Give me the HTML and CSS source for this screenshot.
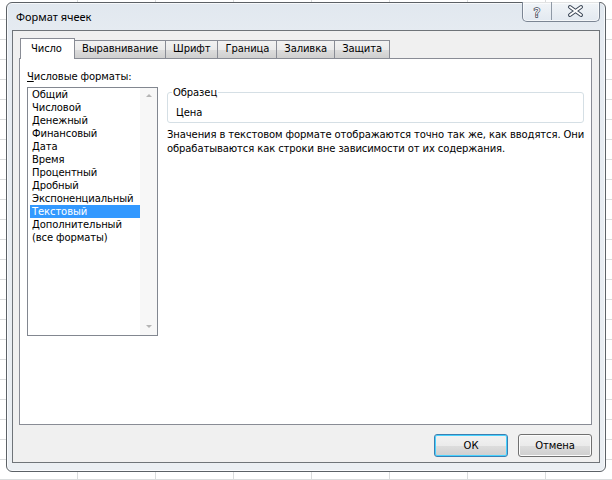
FILE: index.html
```html
<!DOCTYPE html>
<html lang="ru">
	<head>
		<meta charset="UTF-8">
		<title>Формат ячеек</title>
		<link rel="stylesheet" href="styles.css">
	</head>
	<body>
		<div class="window">
			<div class="titlebar">
				<span class="title">Формат ячеек</span>
				<div class="caption-buttons">
					<span class="cap help">
						<svg width="28" height="18" viewBox="0 0 28 18">
							<text x="14" y="15" text-anchor="middle" class="cap-glyph">?</text>
						</svg>
					</span>
					<span class="cap close">
						<svg width="47" height="18" viewBox="0 0 47 18">
							<path d="M18 5 L29 13 M29 5 L18 13" stroke="#3b4656" stroke-width="4" stroke-linecap="round" fill="none"/>
							<path d="M18 5 L29 13 M29 5 L18 13" stroke="#fff" stroke-width="2" stroke-linecap="round" fill="none"/>
						</svg>
					</span>
				</div>
			</div>
			<div class="client">
				<div class="tabs">
					<span class="tab active">Число</span>
					<span class="tab">Выравнивание</span>
					<span class="tab">Шрифт</span>
					<span class="tab">Граница</span>
					<span class="tab">Заливка</span>
					<span class="tab">Защита</span>
				</div>
				<div class="page">
					<div class="formats">
						<div class="label"><u>Ч</u>исловые форматы:</div>
						<div class="listbox">
							<ul class="items">
								<li>Общий</li>
								<li>Числовой</li>
								<li>Денежный</li>
								<li>Финансовый</li>
								<li>Дата</li>
								<li>Время</li>
								<li>Процентный</li>
								<li>Дробный</li>
								<li>Экспоненциальный</li>
								<li class="selected">Текстовый</li>
								<li>Дополнительный</li>
								<li>(все форматы)</li>
							</ul>
							<div class="vscroll">
								<span class="arrow up"></span>
								<span class="arrow down"></span>
							</div>
						</div>
					</div>
					<div class="details">
						<fieldset class="sample">
							<legend>Образец</legend>
							<div class="sample-value">Цена</div>
						</fieldset>
						<p class="desc">
							<span>Значения в текстовом формате отображаются точно так же, как вводятся. Они</span>
							<span>обрабатываются как строки вне зависимости от их содержания.</span>
						</p>
					</div>
				</div>
				<div class="buttons">
					<button class="btn default">ОК</button>
					<button class="btn">Отмена</button>
				</div>
			</div>
		</div>
	</body>
</html>
```

FILE: styles.css
```css
html, body {
	margin: 0;
	padding: 0;
	height: 100%;
}

body {
	/* the excel sheet behind the dialog */
	background-color: #fff;
	background-image:
		repeating-linear-gradient(to bottom, transparent 0, transparent 19px, #dadcdd 19px, #dadcdd 20px),
		repeating-linear-gradient(to right, transparent 0, transparent 77px, #dadcdd 77px, #dadcdd 78px);
	padding: 2px 6px 0 6px;
	box-sizing: border-box;
	font-family: "DejaVu Sans", Tahoma, sans-serif;
	font-size: 10px;
	letter-spacing: -0.1px;
	color: #000;
	overflow: hidden;
}

.window {
	width: 600px;
	height: 470px;
	box-sizing: border-box;
	border: 1px solid #5c6166;
	border-radius: 6px;
	background: linear-gradient(to bottom, #e1e8ef 0, #e7ecf2 40px, #ebeff3 100%);
	box-shadow: 0 0 0 1px rgba(255,255,255,0.7) inset;
	padding: 0 5px 8px 5px;
	display: flex;
	flex-direction: column;
}

.titlebar {
	height: 27px;
	flex: none;
	display: flex;
	align-items: flex-start;
	justify-content: space-between;
}

.title {
	font-family: "Noto Sans", "Liberation Sans", sans-serif;
	font-size: 11px;
	letter-spacing: 0;
	line-height: 16px;
	margin: 6px 0 0 4px;
	color: #000;
}

.caption-buttons {
	display: flex;
	margin-top: -1px;
	border: 1px solid #7b8593;
	border-top: none;
	border-radius: 0 0 5px 5px;
	background: linear-gradient(to bottom, rgba(255,255,255,0.55), rgba(225,232,240,0.6));
	box-shadow: 0 0 0 1px rgba(255,255,255,0.6) inset;
	height: 19px;
}

.cap {
	display: block;
	height: 18px;
}

.cap svg {
	display: block;
}

.help {
	border-right: 1px solid #8f99a6;
}

.cap-glyph {
	font-family: "DejaVu Sans", sans-serif;
	font-size: 13px;
	fill: #fff;
	stroke: #3b4656;
	stroke-width: 1.4px;
	paint-order: stroke;
}

.client {
	flex: 1;
	border: 1px solid #6f7479;
	background-color: #f0f0f0;
	padding: 7px 7px 0 6px;
	display: flex;
	flex-direction: column;
}

.tabs {
	display: flex;
	height: 20px;
	padding-left: 1px;
	position: relative;
	z-index: 1;
}

.tab {
	box-sizing: border-box;
	height: 18px;
	margin-top: 2px;
	padding: 0 7px;
	line-height: 16px;
	border: 1px solid #898c95;
	border-bottom: none;
	margin-left: -1px;
	background: linear-gradient(to bottom, #f2f2f2 0, #ebebeb 50%, #dddddd 51%, #cfcfcf 100%);
	white-space: nowrap;
}

.tab:first-child {
	margin-left: 0;
}

.tab.active {
	height: 21px;
	margin-top: 0;
	padding: 0 12px 0 10px;
	line-height: 20px;
	background: #fff;
	margin-right: -1px;
	position: relative;
	z-index: 2;
}

.tab.active + .tab {
	margin-left: 0;
}

.page {
	height: 367px;
	box-sizing: border-box;
	border: 1px solid #898c95;
	background-color: #fff;
	padding: 11px 7px 0 7px;
	display: flex;
	gap: 9px;
}

.formats {
	width: 131px;
	flex: none;
}

.label {
	line-height: 13px;
	height: 13px;
	margin-bottom: 4px;
}

.label u {
	text-decoration-thickness: 1px;
	text-underline-offset: 1px;
}

.listbox {
	height: 249px;
	box-sizing: border-box;
	border: 1px solid #828790;
	display: flex;
}

.items {
	list-style: none;
	margin: 0;
	padding: 0 0 0 1px;
	flex: 1;
}

.items li {
	height: 13px;
	line-height: 13px;
	padding-left: 2px;
	margin-left: 1px;
	white-space: nowrap;
}

.items li.selected {
	background-color: #3399ff;
	color: #fff;
}

.vscroll {
	width: 17px;
	flex: none;
	background-color: #f7f7f7;
	display: flex;
	flex-direction: column;
	justify-content: space-between;
	align-items: center;
	padding: 6px 0 7px 0;
}

.arrow {
	width: 0;
	height: 0;
	border-left: 3px solid transparent;
	border-right: 3px solid transparent;
}

.arrow.up {
	border-bottom: 3px solid #b5b5b5;
}

.arrow.down {
	border-top: 3px solid #b5b5b5;
}

.details {
	flex: 1;
	padding-top: 16px;
}

.sample {
	margin: 0;
	width: 417px;
	box-sizing: border-box;
	border: 1px solid #d5dfe5;
	border-radius: 3px;
	padding: 7px 7px 3px 7px;
}

.sample legend {
	padding: 0 1px;
	margin-left: -3px;
	line-height: 13px;
}

.sample-value {
	line-height: 13px;
	padding-left: 1px;
}

.desc {
	margin: 5px 0 0 0;
	line-height: 14px;
}

.desc span {
	display: block;
	white-space: nowrap;
}

.buttons {
	display: flex;
	justify-content: flex-end;
	gap: 10px;
	margin-top: 9px;
}

.btn {
	all: unset;
	box-sizing: border-box;
	width: 74px;
	height: 23px;
	text-align: center;
	font-family: "DejaVu Sans", Tahoma, sans-serif;
	font-size: 10px;
	letter-spacing: -0.1px;
	line-height: 21px;
	border: 1px solid #707070;
	border-radius: 3px;
	background: linear-gradient(to bottom, #f2f2f2 0, #ebebeb 50%, #dddddd 51%, #cfcfcf 100%);
	box-shadow: 0 0 0 1px #fcfcfc inset;
}

.btn.default {
	border-color: #3c7fb1;
	box-shadow: 0 0 0 1px #48d2ff inset;
}
```
